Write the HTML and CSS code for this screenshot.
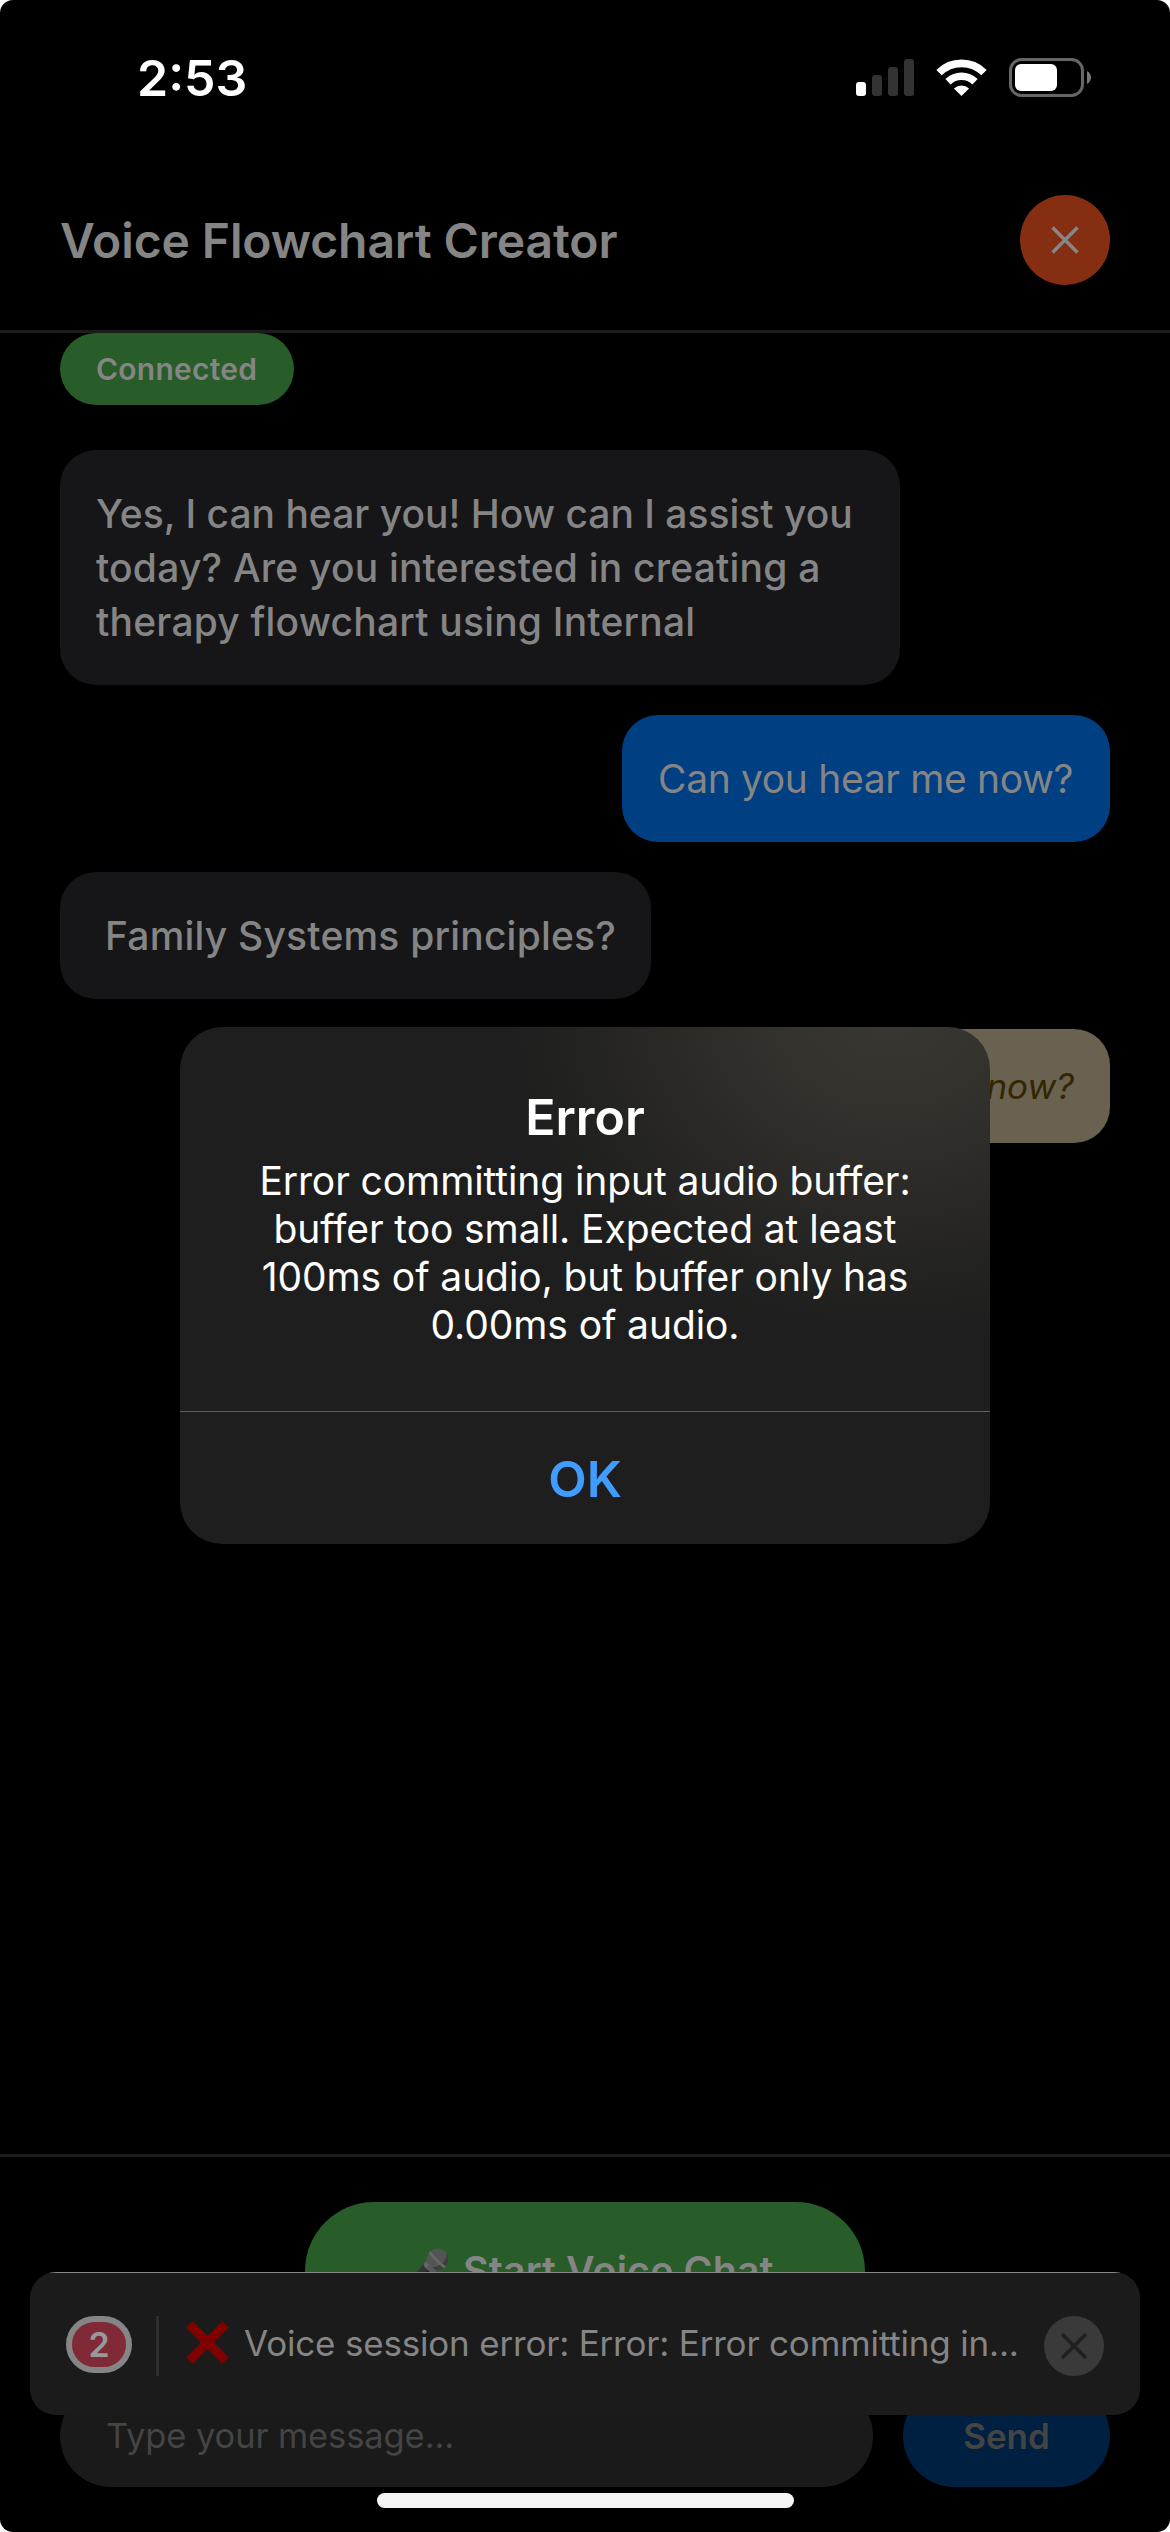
FILE: index.html
```html
<!DOCTYPE html>
<html lang="en">
<head>
<meta charset="utf-8">
<title>Voice Flowchart Creator</title>
<link rel="stylesheet" href="styles.css">
</head>
<body>
<div class="screen">
  <div class="status-bar">
    <span class="clock">2:53</span>
    <svg class="status-icons" width="236" height="39" viewBox="0 0 236 39">
      <rect x="0" y="24" width="10" height="14" rx="3" fill="#fff"/>
      <g fill="#333">
        <rect x="16" y="17" width="10" height="21" rx="3"/>
        <rect x="32" y="9" width="10" height="29" rx="3"/>
        <rect x="48" y="1" width="10" height="37" rx="3"/>
      </g>
      <g fill="none" stroke="#fff" stroke-width="7.6">
        <path d="M83 14.6a32 32 0 0 1 45 0"/>
        <path d="M92 23.7a19.3 19.3 0 0 1 27 0"/>
      </g>
      <path d="M105.500 38l-7.600-7.500a11 11 0 0 1 15.200 0z" fill="#fff"/>
      <rect x="154.500" y="1.500" width="72" height="36" rx="11" fill="none" stroke="#666" stroke-width="3"/>
      <rect x="159" y="6" width="42" height="27" rx="6" fill="#fff"/>
      <path d="M231 13c5.300 2.500 5.300 10.500 0 13z" fill="#777"/>
    </svg>
  </div>

  <header class="header">
    <h1 class="title">Voice Flowchart Creator</h1>
    <button class="close" aria-label="Close">
      <svg width="28" height="28" viewBox="0 0 28 28"><path d="M1.500 1.500l25 25M26.500 1.500l-25 25" stroke="#878787" stroke-width="3.400"/></svg>
    </button>
  </header>

  <main class="chat">
    <span class="connection">Connected</span>
    <div class="messages">
      <div class="bubble assistant">Yes, I can hear you! How can I assist you<br><span class="loose">today? Are you interested in creating a<br>therapy flowchart using Internal</span></div>
      <div class="bubble user">Can you hear me now?</div>
      <div class="bubble assistant continued loose">Family Systems principles?</div>
      <div class="bubble draft">Can you hear me now?</div>
    </div>
  </main>

  <footer class="composer">
    <button class="voice-button"><span class="mic">🎤</span><span>Start Voice Chat</span></button>
    <div class="input-row">
      <div class="input">Type your message...</div>
      <button class="send">Send</button>
    </div>
  </footer>

  <div class="toast">
    <span class="count">2</span>
    <span class="rule"></span>
    <svg class="cross" width="43" height="43" viewBox="0 0 43 43"><path d="M3.500 3.500l36 36M39.500 3.500l-36 36" stroke="#800000" stroke-width="9.500"/></svg>
    <span class="toast-text">Voice session error: Error: Error committing in...</span>
    <span class="dismiss">
      <svg width="28" height="28" viewBox="0 0 28 28"><path d="M3 3l22 22M25 3L3 25" stroke="#1f1f1f" stroke-width="3.400" stroke-linecap="round"/></svg>
    </span>
  </div>

  <div class="alert" role="alertdialog">
    <div class="alert-body">
      <h2 class="alert-title">Error</h2>
      <p class="alert-message">Error committing input audio buffer:<br>buffer too small. Expected at least<br>100ms of audio, but buffer only has<br>0.00ms of audio.</p>
    </div>
    <button class="alert-ok">OK</button>
  </div>

  <div class="home-indicator"></div>
</div>
</body>
</html>
```
FILE: styles.css
```css
* {
  box-sizing: border-box;
}

html {
  background: #fff;
}

body {
  margin: 0;
  font-family: Inter, "Liberation Sans", sans-serif;
}

button {
  border: 0;
  padding: 0;
  font: inherit;
  color: inherit;
}

.screen {
  position: relative;
  display: flex;
  flex-direction: column;
  width: 1170px;
  height: 2532px;
  border-radius: 13px;
  overflow: hidden;
  background: #000;
}

.status-bar {
  display: flex;
  justify-content: space-between;
  align-items: center;
  height: 155px;
  padding: 0 78px 0 137px;
}

.clock {
  font-size: 50px;
  font-weight: 600;
  color: #fff;
}

.header {
  display: flex;
  justify-content: space-between;
  align-items: center;
  height: 178px;
  padding: 0 60px 5px;
  border-bottom: 3px solid #1c1c1c;
}

.title {
  margin: 0;
  font-size: 48px;
  font-weight: 600;
  letter-spacing: -0.1px;
  color: #858585;
}

.close {
  display: flex;
  justify-content: center;
  align-items: center;
  width: 90px;
  height: 90px;
  padding: 0 1px 1px 0;
  border-radius: 50%;
  background: #862e12;
}

.chat {
  flex: 1;
  display: flex;
  flex-direction: column;
  align-items: flex-start;
  gap: 45px;
  padding: 0 60px;
}

.connection {
  width: 234px;
  height: 72px;
  padding: 0 36px;
  border-radius: 36px;
  background: #285c29;
  color: #858585;
  font-size: 30px;
  font-weight: 600;
  letter-spacing: 0.25px;
  line-height: 73px;
}

.messages {
  align-self: stretch;
  display: flex;
  flex-direction: column;
  align-items: flex-start;
  gap: 30px;
}

.bubble {
  padding: 37px 36px 36px;
  border-radius: 36px;
  font-size: 39px;
  line-height: 54px;
  white-space: nowrap;
}

.assistant {
  width: 840px;
  background: #161618;
  color: #858585;
  font-weight: 500;
}

.continued {
  width: 591px;
  padding-left: 45px;
}

.loose {
  letter-spacing: 0.2px;
}

.user {
  align-self: flex-end;
  width: 488px;
  background: #003f82;
  color: #858585;
  letter-spacing: -0.35px;
}

.draft {
  align-self: flex-end;
  padding: 36px;
  background: #6a6250;
  color: #332600;
  font-size: 35px;
  font-style: italic;
  line-height: 42px;
}

.composer {
  display: flex;
  flex-direction: column;
  align-items: center;
  gap: 45px;
  height: 378px;
  padding: 45px 60px 0;
  border-top: 3px solid #1c1c1c;
}

.voice-button {
  display: flex;
  align-items: center;
  width: 560px;
  height: 138px;
  padding-left: 93px;
  border-radius: 69px;
  background: #285c29;
  color: #858585;
  font-size: 39.4px;
  font-weight: 600;
  letter-spacing: 0.1px;
}

.mic {
  width: 65px;
  font-size: 43px;
  line-height: 50px;
  text-align: left;
  filter: brightness(0.53) grayscale(1);
}

.input-row {
  align-self: stretch;
  display: flex;
  gap: 30px;
}

.input {
  flex: 1;
  height: 102px;
  padding-left: 46px;
  border-radius: 51px;
  background: #1a1a1a;
  color: #444;
  font-size: 34.5px;
  letter-spacing: -0.1px;
  line-height: 102px;
}

.send {
  width: 207px;
  height: 102px;
  border-radius: 51px;
  background: #002041;
  color: #444;
  font-size: 35px;
  font-weight: 600;
}

.toast {
  position: absolute;
  left: 30px;
  top: 2272px;
  display: flex;
  align-items: center;
  width: 1110px;
  height: 143px;
  padding: 4px 36px 0;
  border-radius: 26px;
  background: linear-gradient(#888 1px, #1b1b1b 1px);
}

.count {
  width: 66px;
  height: 57px;
  margin-bottom: 3px;
  border: 6px solid #858585;
  border-radius: 29px;
  background: #802a37;
  color: #999;
  font-size: 34px;
  font-weight: 600;
  line-height: 46px;
  text-align: center;
}

.rule {
  width: 3px;
  height: 60px;
  margin: 0 27px 0 24px;
  background: #2e2e2e;
}

.cross {
  margin: 0 15px 6px 0;
}

.toast-text {
  flex: 1;
  padding-bottom: 5px;
  color: #858585;
  font-size: 35px;
  letter-spacing: -0.19px;
  white-space: nowrap;
}

.dismiss {
  display: flex;
  justify-content: center;
  align-items: center;
  width: 60px;
  height: 60px;
  border-radius: 50%;
  background: #3a3a3a;
}

.alert {
  position: absolute;
  left: 180px;
  top: 1027px;
  display: flex;
  flex-direction: column;
  width: 810px;
  height: 517px;
  border-radius: 42px;
  overflow: hidden;
  background: radial-gradient(ellipse 400px 340px at 710px -20px, #383731 0%, #34332e 25%, #292825 60%, #212120 85%, #1e1e1e 100%), #1e1e1e;
  color: #fff;
  text-align: center;
}

.alert-body {
  flex: 1;
  padding-top: 60px;
}

.alert-title {
  margin: 0;
  font-size: 50px;
  font-weight: 600;
  line-height: 60px;
}

.alert-message {
  margin: 10px 0 0;
  font-size: 39px;
  letter-spacing: -0.1px;
  line-height: 48px;
}

.alert-ok {
  height: 133px;
  border-top: 1px solid #606060;
  background: none;
  color: #409cff;
  font-size: 50px;
  font-weight: 600;
  line-height: 134px;
}

.home-indicator {
  position: absolute;
  left: 377px;
  bottom: 24px;
  width: 417px;
  height: 15px;
  border-radius: 8px;
  background: #f5f5f5;
}
```
